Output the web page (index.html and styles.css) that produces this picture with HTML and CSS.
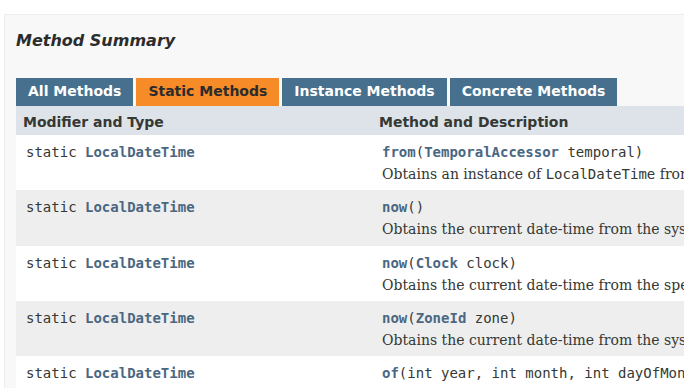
FILE: index.html
```html
<!DOCTYPE html>
<html>
<head>
<meta charset="utf-8">
<link rel="stylesheet" href="styles.css">
</head>
<body>
<section class="summary">
  <h3 class="title">Method Summary</h3>
  <div class="tabs">
    <span class="tab">All Methods</span>
    <span class="tab active">Static Methods</span>
    <span class="tab">Instance Methods</span>
    <span class="tab">Concrete Methods</span>
  </div>
  <table class="members">
    <thead>
      <tr><th class="col1">Modifier and Type</th><th class="col2">Method and Description</th></tr>
    </thead>
    <tbody>
      <tr class="alt">
        <td class="col1"><code>static <a class="link">LocalDateTime</a></code></td>
        <td class="col2"><code><a class="link">from</a>(<a class="link">TemporalAccessor</a> temporal)</code>
          <div class="block">Obtains an instance of <code>LocalDateTime</code> from a temporal object.</div></td>
      </tr>
      <tr class="row">
        <td class="col1"><code>static <a class="link">LocalDateTime</a></code></td>
        <td class="col2"><code><a class="link">now</a>()</code>
          <div class="block">Obtains the current date-time from the system clock in the default time-zone.</div></td>
      </tr>
      <tr class="alt">
        <td class="col1"><code>static <a class="link">LocalDateTime</a></code></td>
        <td class="col2"><code><a class="link">now</a>(<a class="link">Clock</a> clock)</code>
          <div class="block">Obtains the current date-time from the specified clock.</div></td>
      </tr>
      <tr class="row">
        <td class="col1"><code>static <a class="link">LocalDateTime</a></code></td>
        <td class="col2"><code><a class="link">now</a>(<a class="link">ZoneId</a> zone)</code>
          <div class="block">Obtains the current date-time from the system clock in the specified time-zone.</div></td>
      </tr>
      <tr class="alt">
        <td class="col1"><code>static <a class="link">LocalDateTime</a></code></td>
        <td class="col2"><code><a class="link">of</a>(int&nbsp;year, int&nbsp;month, int&nbsp;dayOfMonth, int&nbsp;hour, int&nbsp;minute)</code>
          <div class="block">Obtains an instance of <code>LocalDateTime</code> from year, month, day, hour and minute.</div></td>
      </tr>
    </tbody>
  </table>
</section>
</body>
</html>
```
FILE: styles.css
```css
html, body {
  overflow: hidden;
}
body {
  margin: 0;
  padding: 14px 0 0 4px;
  background: #ffffff;
  color: #353833;
  font-family: "DejaVu Sans", Arial, sans-serif;
  font-size: 14px;
}
.summary {
  width: 1100px;
  background: #f8f8f8;
  border: 1px solid #ededed;
  padding: 0 0 0 11px;
  height: 420px;
}
.title {
  margin: 0;
  padding: 16px 0 0 0;
  font-size: 16px;
  font-style: italic;
  font-weight: bold;
  color: #2c2c2c;
  line-height: 19px;
}
.tabs {
  display: flex;
  gap: 3px;
  margin-top: 28px;
}
.tab {
  display: block;
  white-space: nowrap;
  height: 16px;
  padding: 5px 12px 7px 12px;
  background: #46708e;
  color: #ffffff;
  font-weight: bold;
  font-size: 14px;
  line-height: 17px;
}
.tab.active {
  background: #f78b28;
  color: #2c2c2c;
}
.members {
  width: 100%;
  border-collapse: collapse;
  border-spacing: 0;
}
.members th {
  background: #dee3e9;
  text-align: left;
  font-weight: bold;
  font-size: 14px;
  line-height: 18px;
  padding: 7px 3px 4px 7px;
  color: #353833;
}
.members th.col1 {
  width: 346px;
}
.members td {
  vertical-align: top;
  padding: 9px 3px 2px 10px;
  height: 44.25px;
}
.members td.col1 {
  width: 343px;
}
tr.alt {
  background: #ffffff;
}
tr.row {
  background: #eeeeef;
}
code {
  font-family: "DejaVu Sans Mono", monospace;
  font-size: 14px;
  line-height: 17px;
}
.link {
  color: #4a6782;
  font-weight: bold;
  text-decoration: none;
}
.block {
  font-family: "DejaVu Serif", Georgia, serif;
  font-size: 14px;
  line-height: 20px;
  margin: 3px 10px 2px 0;
  white-space: nowrap;
}
.block code {
  font-weight: normal;
}
```
